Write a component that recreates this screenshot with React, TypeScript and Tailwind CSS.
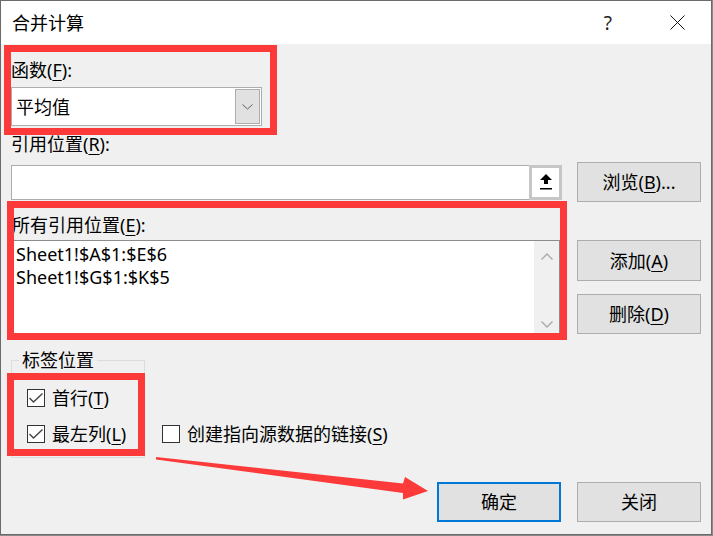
import React from "react";

const font = "font-['Noto_Sans','Noto_Sans_CJK_SC',sans-serif]";

function Key({ k }: { k: string }) {
  return (
    <>
      (<u className="underline-offset-[3px] decoration-1">{k}</u>)
    </>
  );
}

function Btn({ children, primary, h = "h-[40px]" }: { children: React.ReactNode; primary?: boolean; h?: string }) {
  return (
    <div
      className={`w-[124px] ${h} bg-[#e1e1e1] flex items-center justify-center ${
        primary ? "border-2 border-[#0078d7]" : "border border-[#adadad]"
      }`}
    >
      {children}
    </div>
  );
}

function Check({ checked, children }: { checked?: boolean; children: React.ReactNode }) {
  return (
    <div className="flex items-center h-[24px]">
      <div className="w-[18px] h-[18px] border border-[#333333] bg-white flex items-center justify-center">
        {checked && (
          <svg width="16" height="16" viewBox="0 0 16 16">
            <path d="M1.5 8 L5.5 12 L14.5 3.5" fill="none" stroke="#444" strokeWidth="1.4" />
          </svg>
        )}
      </div>
      <span className="ml-[7px]">{children}</span>
    </div>
  );
}

export default function App() {
  return (
    <div className={`relative w-[713px] h-[536px] bg-[#8a8a8a] ${font} text-[18px] leading-[24px] text-black`}>
      <div className="w-[712px] h-[535px] border border-[#6b6b6b] bg-[#f0f0f0] flex flex-col">
        {/* title bar */}
        <div className="h-[43px] bg-white flex items-center pl-[11px] pr-[26px] shrink-0">
          <span>合并计算</span>
          <span className="ml-auto text-[19px] text-[#222]">?</span>
          <svg className="ml-[58px]" width="15" height="15" viewBox="0 0 15 15">
            <path d="M0.5 0.5 L14.5 14.5 M14.5 0.5 L0.5 14.5" stroke="#111" strokeWidth="1" />
          </svg>
        </div>

        <div className="flex flex-col pl-[10px]">
          <div className="mt-[14px]">
            函数<Key k="F" />:
          </div>
          <div className="mt-[5px] w-[251px] h-[39px] border border-[#adadad] bg-white flex items-center">
            <span className="pl-[4px]">平均值</span>
            <div className="ml-auto mr-[1px] w-[25px] h-[35px] bg-[#e1e1e1] border border-[#adadad] flex items-center justify-center">
              <svg width="11" height="6" viewBox="0 0 11 6">
                <path d="M0.5 0.5 L5.5 5 L10.5 0.5" fill="none" stroke="#606060" strokeWidth="1" />
              </svg>
            </div>
          </div>

          <div className="mt-[6px]">
            引用位置<Key k="R" />:
          </div>
          <div className="mt-[6px] flex items-center h-[40px]">
            <div className="w-[551px] h-[35px] border border-[#adadad] bg-white flex justify-end">
              <div className="-mr-px -my-px w-[33px] h-[35px] border-[3px] border-[#c6c6c6] bg-white flex items-center justify-center">
                <svg width="14" height="17" viewBox="0 0 14 17">
                  <path d="M7 0 L13 6 L9 6 L9 10 L5 10 L5 6 L1 6 Z" fill="#000" />
                  <rect x="1" y="14" width="12" height="1.5" fill="#000" />
                </svg>
              </div>
            </div>
            <div className="ml-[15px]">
              <Btn>
                浏览<Key k="B" />...
              </Btn>
            </div>
          </div>

          <div className="mt-[11px] pl-px">
            所有引用位置<Key k="E" />:
          </div>
          <div className="mt-[3px] flex items-start">
            <div className="w-[549px] h-[94px] border border-[#8c8c8c] bg-white flex">
              <div className="flex-1 pl-[4px] pt-[2px] leading-[23px]">
                <div>Sheet1!$A$1:$E$6</div>
                <div>Sheet1!$G$1:$K$5</div>
              </div>
              <div className="w-[25px] bg-[#f0f0f0] flex flex-col items-center justify-between pt-[12px] pb-[5px]">
                <svg width="12" height="7" viewBox="0 0 12 7">
                  <path d="M0.5 6.5 L6 1 L11.5 6.5" fill="none" stroke="#a8a8a8" strokeWidth="1.3" />
                </svg>
                <svg width="12" height="7" viewBox="0 0 12 7">
                  <path d="M0.5 0.5 L6 6 L11.5 0.5" fill="none" stroke="#a8a8a8" strokeWidth="1.3" />
                </svg>
              </div>
            </div>
            <div className="ml-[17px] flex flex-col gap-[13px]">
              <Btn h="h-[41px]">
                添加<Key k="A" />
              </Btn>
              <Btn>
                删除<Key k="D" />
              </Btn>
            </div>
          </div>

          <div className="mt-[14px] flex items-end">
            <fieldset className="w-[134px] h-[110px] border border-[#dcdcdc] pl-[15px] pb-[11px] flex flex-col">
              <legend className="-ml-[8px] px-[3px]">标签位置</legend>
              <div className="mt-[14px]">
                <Check checked>
                  首行<Key k="T" />
                </Check>
              </div>
              <div className="mt-[12px]">
                <Check checked>
                  最左列<Key k="L" />
                </Check>
              </div>
            </fieldset>
            <div className="ml-[17px] mb-[12px]">
              <Check>
                创建指向源数据的链接<Key k="S" />
              </Check>
            </div>
          </div>

          <div className="mt-[24px] flex justify-end pr-[10px] gap-[16px]">
            <Btn primary>确定</Btn>
            <Btn>关闭</Btn>
          </div>
        </div>
      </div>

      {/* annotation overlays */}
      <div className="absolute left-[4px] top-[45px] w-[273px] h-[90px] border-[7px] border-[#fc3a3a]" />
      <div className="absolute left-[7px] top-[201px] w-[560px] h-[139px] border-[7px] border-[#fc3a3a]" />
      <div className="absolute left-[7px] top-[373px] w-[138px] h-[83px] border-[7px] border-[#fc3a3a]" />
      <svg className="absolute left-0 top-0" width="713" height="536" viewBox="0 0 713 536">
        <polygon points="156,457 156,459.5 403,493 403,499.5 428,491 405,477 403,483.5" fill="#fc3a3a" />
      </svg>
    </div>
  );
}
